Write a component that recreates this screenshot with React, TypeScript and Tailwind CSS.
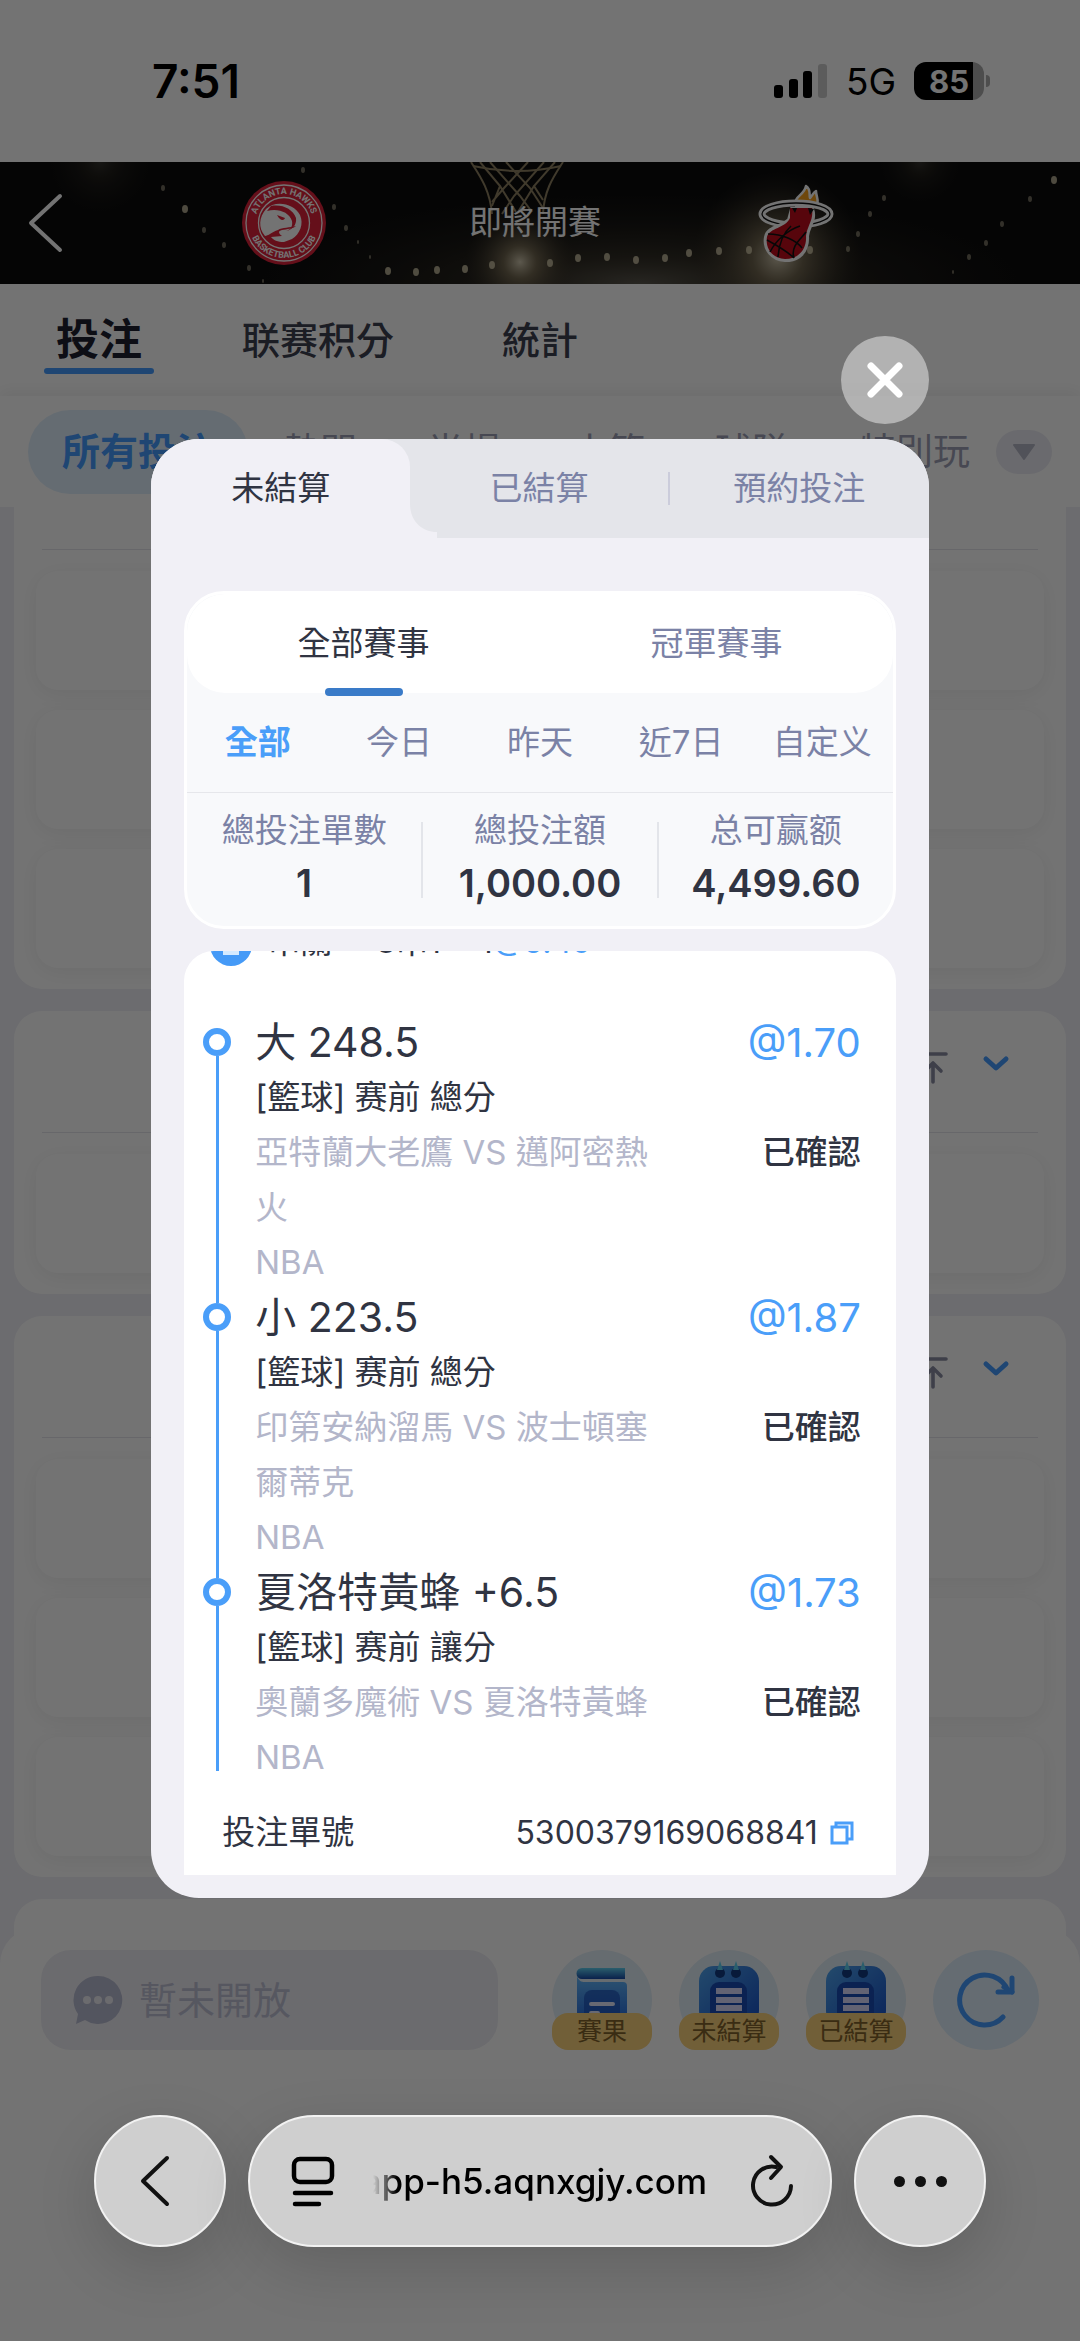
import React, { useState } from "react";

type Leg = {
  id: number;
  pick: string;
  odds: string;
  market: string;
  teams: string;
  league: string;
  status: string;
};

const legs: Leg[] = [
  {
    id: 1,
    pick: "大 248.5",
    odds: "@1.70",
    market: "[籃球] 赛前 總分",
    teams: "亞特蘭大老鷹 VS 邁阿密熱火",
    league: "NBA",
    status: "已確認",
  },
  {
    id: 2,
    pick: "小 223.5",
    odds: "@1.87",
    market: "[籃球] 赛前 總分",
    teams: "印第安納溜馬 VS 波士頓塞爾蒂克",
    league: "NBA",
    status: "已確認",
  },
  {
    id: 3,
    pick: "夏洛特黃蜂 +6.5",
    odds: "@1.73",
    market: "[籃球] 赛前 讓分",
    teams: "奧蘭多魔術 VS 夏洛特黃蜂",
    league: "NBA",
    status: "已確認",
  },
];

const summary = [
  { label: "總投注單數", value: "1" },
  { label: "總投注額", value: "1,000.00" },
  { label: "总可赢额", value: "4,499.60" },
];

const marketFilters = ["熱門", "半場", "小節", "球隊", "特別玩"];
const modalTabs = ["未結算", "已結算", "預約投注"];
const dateRanges = ["全部", "今日", "昨天", "近7日", "自定义"];

// Arena lamps behind the scoreboard: x, y, radius
const lamps = [
  [303, 8, 3], [163, 26, 3], [185, 47, 4], [204, 68, 3], [224, 83, 3], [249, 106, 3], [263, 119, 2],
  [334, 45, 3], [346, 66, 3], [358, 80, 2], [370, 95, 2], [388, 109, 4], [416, 110, 4], [437, 108, 4],
  [465, 107, 4], [492, 103, 4], [550, 101, 4], [578, 96, 4], [607, 95, 4], [636, 98, 4], [665, 96, 4],
  [689, 91, 4], [719, 89, 4], [749, 88, 4], [810, 88, 4], [848, 87, 3], [858, 72, 3], [870, 52, 3],
  [884, 36, 3], [1054, 18, 4], [1030, 37, 3], [1002, 62, 3], [986, 81, 3], [969, 95, 3], [953, 110, 2],
];

const ArenaBackdrop = () => (
  <svg
    className="absolute inset-0 h-full w-full"
    viewBox="0 0 1080 122"
    preserveAspectRatio="xMidYMid slice"
    aria-hidden="true"
  >
    <defs>
      <radialGradient id="glow">
        <stop offset="0" stopColor="#d6cdb4" stopOpacity="0.95" />
        <stop offset="0.3" stopColor="#8b7e62" stopOpacity="0.7" />
        <stop offset="1" stopColor="#3a3226" stopOpacity="0" />
      </radialGradient>
    </defs>
    <rect width="1080" height="122" fill="#0d0d0d" />
    <ellipse cx="640" cy="122" rx="380" ry="90" fill="url(#glow)" opacity="0.4" />
    <circle cx="520" cy="100" r="55" fill="url(#glow)" />
    <circle cx="778" cy="95" r="85" fill="url(#glow)" />
    <circle cx="100" cy="0" r="50" fill="url(#glow)" opacity="0.2" />
    <circle cx="920" cy="0" r="40" fill="url(#glow)" opacity="0.2" />
    {lamps.map(([x, y, r]) => (
      <ellipse key={`${x}-${y}`} cx={x} cy={y} rx={r - 1} ry={r} fill="#d6ccad" opacity={r > 3 ? 0.8 : 0.5} />
    ))}
    <g fill="none" stroke="#8f8062" strokeWidth="2">
      <path d="M471 0 C480 14 490 28 492 52 M563 0 C554 14 544 28 543 52" />
      <path d="M480 0 L500 24 L492 44 M490 0 L520 34 L532 50 M506 0 L530 26 L543 46 M528 0 L504 26 L492 40 M544 0 L514 34 L502 52 M555 0 L534 24 L543 38 M500 24 L516 50 M534 24 L518 50" />
      <path d="M473 4 Q517 14 561 4" />
    </g>
  </svg>
);

const HawksLogo = () => (
  <svg className="h-[84px] w-[84px]" viewBox="0 0 84 84" role="img" aria-label="Atlanta Hawks">
    <defs>
      <path id="hawks-top" d="M13 42 A29 29 0 0 1 71 42" />
      <path id="hawks-bottom" d="M7 42 A35 35 0 0 0 77 42" />
    </defs>
    <circle cx="42" cy="42" r="42" fill="#e0233a" />
    <circle cx="42" cy="42" r="38" fill="none" stroke="#fff" strokeWidth="1.3" />
    <circle cx="42" cy="42" r="25.5" fill="none" stroke="#fff" strokeWidth="1.3" />
    <path
      d="M24 28 C33 19 52 22 58 34 C62 43 58 53 50 58 L42 61 C36 61 31 59 29 56 L40 55 C36 52 36 50 40 49 C45 48 51 48 54 45 C48 47 40 46 36 49 C30 51 26 55 23 55 C16 47 17 36 24 28Z"
      fill="#fff"
    />
    <path d="M25 30 C36 27 47 31 50 40 C51 46 48 49 44 50 C50 49 55 44 54 37 C51 28 40 23 29 25Z" fill="#e0233a" />
    <path d="M35 34 L43 37 C42 40 38 40 35 34Z" fill="#e0233a" />
    <g fill="#fff" className="font-['Roboto',sans-serif] text-[9px] font-bold">
      <text textAnchor="middle">
        <textPath href="#hawks-top" startOffset="50%">ATLANTA HAWKS</textPath>
      </text>
      <text textAnchor="middle">
        <textPath href="#hawks-bottom" startOffset="50%">BASKETBALL CLUB</textPath>
      </text>
    </g>
  </svg>
);

const HeatLogo = () => (
  <svg className="h-[78px] w-[76px]" viewBox="0 0 76 78" role="img" aria-label="Miami Heat">
    <path
      d="M38 22 C35 12 46 12 48 2 C53 5 51 10 52 14 C54 12 55 9 58 7 C58 13 62 17 58 23Z"
      fill="#f5a01c" stroke="#fff" strokeWidth="2.5" strokeLinejoin="round"
    />
    <ellipse cx="38" cy="30" rx="34" ry="11" fill="none" stroke="#fff" strokeWidth="7" />
    <ellipse cx="38" cy="30" rx="34" ry="11" fill="none" stroke="#111" strokeWidth="1.3" />
    <path
      d="M34 25 H54 C58 36 50 42 49 52 C50 68 40 77 27 76 C13 75 6 64 8 53 C10 43 24 43 31 36Z"
      fill="#fff" stroke="#fff" strokeWidth="4"
    />
    <path d="M32 24 H54 C56 36 49 42 48 52 C49 66 40 75 27 75 C14 74 7 64 9 53 C11 44 28 44 32 34Z" fill="#c00d1c" />
    <path
      d="M9 56 C20 62 32 70 36 74 M10 50 C24 50 38 56 44 64 M12 68 C18 56 30 46 42 42 M20 73 C21 60 24 50 33 42 M36 74 C32 62 44 54 48 48"
      fill="none" stroke="#111" strokeWidth="1.6"
    />
    <path d="M34 24 L37 29 L39 24Z M50 24 L52 31 L56 25Z" fill="#111" />
  </svg>
);

const StatusBar = () => (
  <div className="flex h-[162px] items-center justify-between pr-[90px] pl-[152px] text-black">
    <span className="text-[46px] leading-none font-semibold">7:51</span>
    <div className="flex items-center gap-[18px]">
      <svg className="h-[36px] w-[54px]" viewBox="0 0 54 36" aria-hidden="true">
        <rect x="0" y="22" width="9" height="13" rx="3" />
        <rect x="15" y="16" width="9" height="19" rx="3" />
        <rect x="29" y="8" width="9" height="27" rx="3" />
        <rect x="44" y="1" width="9" height="34" rx="3" fill="#000" opacity="0.2" />
      </svg>
      <span className="text-[37px] leading-none">5G</span>
      <div className="flex items-center gap-0.5">
        <span className="flex h-[38px] w-[70px] items-center justify-center rounded-xl bg-linear-to-r from-black from-84% to-[#aaaaaa] to-84% text-[31px] leading-none font-bold text-white">
          85
        </span>
        <span className="h-3 w-1 rounded-r-full bg-[#aaaaaa]" />
      </div>
    </div>
  </div>
);

const MatchBanner = () => (
  <div className="relative h-[122px] overflow-hidden bg-[#0d0d0d]">
    <ArenaBackdrop />
    <div className="relative flex h-full items-center text-white">
      <button type="button" aria-label="返回" className="w-[158px] pl-[27px]">
        <svg className="h-[60px] w-[36px]" viewBox="0 0 36 60" fill="none" stroke="currentColor" strokeWidth="4" strokeLinecap="round" strokeLinejoin="round">
          <path d="M33 3 L4 30 L33 57" />
        </svg>
      </button>
      <div className="flex flex-1 justify-center">
        <HawksLogo />
      </div>
      <p className="flex-1 pr-2.5 text-center text-[33px]">即將開賽</p>
      <div className="flex flex-1 justify-center">
        <HeatLogo />
      </div>
      <div className="w-[158px]" />
    </div>
  </div>
);

const PageTabs = () => (
  <nav className="flex h-[112px] items-center gap-[88px] px-11 text-[38px] font-medium text-[#3c4050]">
    <button type="button" className="flex w-[110px] flex-col items-center pt-1 text-[43px] leading-[58px] font-bold text-[#1e2130]">
      投注
      <span className="h-1.5 w-full rounded-full bg-[#469cff]" />
    </button>
    <button type="button">联赛积分</button>
    <button type="button" className="ml-5">統計</button>
  </nav>
);

const MarketFilterBar = () => (
  <div className="flex h-[111px] items-center gap-6 bg-white px-7 shadow-[0_-4px_16px_rgba(0,0,0,0.06)]">
    <div className="flex flex-1 items-center overflow-hidden text-[37px] whitespace-nowrap text-[#9da0b6]">
      <button type="button" className="h-[84px] rounded-full bg-[#e1f0fc] px-[34px] text-[38px] font-bold text-[#469cff]">
        所有投注
      </button>
      {marketFilters.map((name) => (
        <button key={name} type="button" className="px-[35px]">
          {name}
        </button>
      ))}
    </div>
    <button type="button" aria-label="更多" className="flex h-11 w-[56px] items-center justify-center rounded-full bg-[#ececf3]">
      <svg className="h-[18px] w-[24px]" viewBox="0 0 24 18" fill="#b4b6c6" stroke="#b4b6c6" strokeWidth="2" strokeLinejoin="round">
        <path d="M2 2 H22 L12 16Z" />
      </svg>
    </button>
  </div>
);

const MarketCard = ({ rows, scrolled = false }: { rows: number; scrolled?: boolean }) => (
  <section className={scrolled ? "rounded-b-[28px] bg-white pb-[21px]" : "rounded-[28px] bg-white pb-[21px]"}>
    {scrolled ? (
      <div className="mx-7 h-[43px] border-b border-[#e4e4ea]" />
    ) : (
      <div className="mx-7 flex h-[122px] items-center justify-end gap-[34px] border-b border-[#e4e4ea] pr-7 pb-2">
        <svg className="h-8 w-[30px]" viewBox="0 0 30 32" fill="none" stroke="#8a8da3" strokeWidth="3.6" strokeLinecap="round" strokeLinejoin="round" aria-hidden="true">
          <path d="M2 2 H28 M15 30 V12 M7 19 L15 11 L23 19" />
        </svg>
        <button type="button" aria-label="展開" className="pb-2">
          <svg className="h-[18px] w-[28px]" viewBox="0 0 28 18" fill="none" stroke="#469cff" strokeWidth="5" strokeLinecap="round" strokeLinejoin="round">
            <path d="M4 4 L14 13 L24 4" />
          </svg>
        </button>
      </div>
    )}
    <div className="flex flex-col gap-5 px-[22px] pt-[21px]">
      {Array.from({ length: rows }, (_, i) => (
        <div key={i} className="h-[119px] rounded-[22px] bg-white shadow-[0_4px_22px_rgba(0,0,0,0.06)]" />
      ))}
    </div>
  </section>
);

const BookIcon = () => (
  <svg className="h-[62px] w-[62px]" viewBox="0 0 62 62" aria-hidden="true">
    <defs>
      <linearGradient id="book-cover" x1="0" y1="0" x2="0" y2="1">
        <stop offset="0" stopColor="#63b8fa" />
        <stop offset="1" stopColor="#1d5fd8" />
      </linearGradient>
      <linearGradient id="book-spine" x1="0" y1="0" x2="0" y2="1">
        <stop offset="0" stopColor="#5fd0f0" />
        <stop offset="1" stopColor="#1649a8" />
      </linearGradient>
    </defs>
    <path d="M11 2 H54 V13 H11 A5 5 0 0 1 11 2Z" fill="url(#book-spine)" />
    <path d="M6 10 C8 15 10 16 14 16 H52 Q56 16 56 20 V62 H6Z" fill="url(#book-cover)" />
    <rect x="13" y="24" width="36" height="38" rx="8" fill="#1d52bb" opacity="0.7" />
    <path d="M20 38 H42 M20 47 H27" stroke="#e4e8ff" strokeWidth="4" strokeLinecap="round" />
  </svg>
);

const ClipboardIcon = () => (
  <svg className="h-[62px] w-[62px] overflow-visible" viewBox="0 0 62 62" aria-hidden="true">
    <defs>
      <linearGradient id="board" x1="0" y1="0" x2="1" y2="1">
        <stop offset="0" stopColor="#4fa5f0" />
        <stop offset="1" stopColor="#164fc8" />
      </linearGradient>
    </defs>
    <rect x="1" y="0" width="60" height="60" rx="15" fill="url(#board)" />
    <rect x="12" y="16" width="37" height="44" rx="9" fill="#1a4db5" />
    <path d="M18 25 H44 M18 34 H44 M18 42 H44" stroke="#dcdcff" strokeWidth="6" />
    <circle cx="22" cy="7" r="5" fill="#123a80" />
    <circle cx="38" cy="7" r="5" fill="#123a80" />
    <path d="M19 4 L22 -5 L25 4Z M35 4 L38 -5 L41 4Z" fill="#5fd0f0" />
  </svg>
);

const shortcuts = [
  { label: "賽果", icon: <BookIcon /> },
  { label: "未結算", icon: <ClipboardIcon /> },
  { label: "已結算", icon: <ClipboardIcon /> },
];

const BottomPanel = () => (
  <div className="relative -mt-9 flex items-center rounded-t-[36px] bg-white px-[41px] pt-[22px] pb-[65px]">
    <label className="mr-[54px] flex h-[100px] min-w-0 flex-1 items-center gap-4 rounded-[30px] bg-[#eeeef4] pl-8">
      <svg className="h-[50px] w-[50px] shrink-0" viewBox="0 0 50 50" aria-hidden="true">
        <path d="M25 1 A24 24 0 1 1 12 45 L3 49 L5 39 A24 24 0 0 1 25 1Z" fill="#b9bcd2" />
        <g fill="#eeeef4">
          <circle cx="14" cy="25" r="4" />
          <circle cx="25" cy="25" r="4" />
          <circle cx="36" cy="25" r="4" />
        </g>
      </svg>
      <input
        type="text"
        aria-label="聊天"
        placeholder="暫未開放"
        className="w-full min-w-0 bg-transparent text-[38px] placeholder:text-[#bfc2d6]"
      />
    </label>
    <div className="flex gap-[27px]">
      {shortcuts.map(({ label, icon }) => (
        <button key={label} type="button" className="relative flex h-[100px] w-[100px] justify-center rounded-full bg-[#e3eff8] pt-4">
          {icon}
          <span className="absolute inset-x-0 bottom-0 flex h-[37px] items-center justify-center rounded-2xl bg-[#fad27c] text-[25px] leading-none text-[#81622a]">
            {label}
          </span>
        </button>
      ))}
      <button type="button" aria-label="刷新" className="flex h-[100px] w-[106px] items-center justify-center rounded-[50%] bg-[#e1f0fc]">
        <svg className="h-[58px] w-[58px]" viewBox="0 0 58 58" fill="none" stroke="#469cff" strokeWidth="5" strokeLinecap="round" strokeLinejoin="round">
          <path d="M46 46 A25 25 0 1 1 51 20" />
          <path d="M55 7 V21 H41" />
          <path d="M47 16 L55 21" />
        </svg>
      </button>
    </div>
  </div>
);

const BetLeg = ({ leg, first, last }: { leg: Leg; first: boolean; last: boolean }) => (
  <li className="flex gap-6 pr-[35px] pl-[19px]">
    <div className={last ? "flex w-7 flex-col items-center pb-3.5" : "flex w-7 flex-col items-center"}>
      <span className={first ? "h-[13px] w-[3px]" : "h-[13px] w-[3px] bg-[#4a9ef9]"} />
      <span className="h-7 w-7 rounded-full border-[6px] border-[#4a9ef9] bg-white" />
      <span className="w-[3px] flex-1 bg-[#4a9ef9]" />
    </div>
    <div className="flex-1 text-[33px] leading-[55px] text-[#303442]">
      <div className="flex justify-between text-[41px]">
        <span>{leg.pick}</span>
        <span className="text-[40px] text-[#4a9ef9]">{leg.odds}</span>
      </div>
      <p>{leg.market}</p>
      <div className="flex items-start justify-between">
        <p className="w-[410px] text-[#b3b6ca]">{leg.teams}</p>
        <span className="font-medium">{leg.status}</span>
      </div>
      <p className="text-[#b3b6ca]">{leg.league}</p>
    </div>
  </li>
);

const BetSlip = () => (
  <div className="overflow-hidden rounded-t-[30px] bg-white">
    {/* Parlay header, scrolled mostly out of view */}
    <div className="-mt-[27px] flex h-[42px] items-center pr-[35px] pl-[26px] text-[32px] text-[#303442]">
      <svg className="mr-4 h-[42px] w-[42px]" viewBox="0 0 42 42" aria-hidden="true">
        <circle cx="21" cy="21" r="21" fill="#459af7" />
        <path d="M13 11 H29 V31 H13Z" fill="#d5eaff" />
      </svg>
      <span className="mr-11 pb-1.5">串關</span>
      <span className="pb-1.5">3串1 * 1</span>
      <span className="pb-1.5 text-[#4a9ef9]">@5.49</span>
    </div>
    <ul className="mt-[49px]">
      {legs.map((leg, i) => (
        <BetLeg key={leg.id} leg={leg} first={i === 0} last={i === legs.length - 1} />
      ))}
    </ul>
    <div className="mt-1.5 flex h-[84px] items-center justify-between pr-[42px] pl-[38px] text-[33px] text-[#303442]">
      <span>投注單號</span>
      <div className="flex items-center gap-3">
        <span className="text-[32px]">5300379169068841</span>
        <button type="button" aria-label="複製">
          <svg className="h-6 w-6" viewBox="0 0 24 24" fill="none" stroke="#4a9ef9" strokeWidth="3">
            <path d="M2 6 H17 V22 H2Z" />
            <path d="M6 6 V2 H22 V18 H17" />
          </svg>
        </button>
      </div>
    </div>
  </div>
);

const BetRecordModal: React.FC = () => {
  const [range, setRange] = useState("全部");

  return (
    <div className="absolute inset-0 z-10 flex flex-col items-center bg-black/55 pt-[336px]">
      <div className="flex w-[72%] flex-col gap-[15px]">
        <button type="button" aria-label="關閉" className="flex h-[88px] w-[88px] items-center justify-center self-end rounded-full bg-white/45">
          <svg className="h-10 w-10" viewBox="0 0 40 40" stroke="#fff" strokeWidth="7" strokeLinecap="round">
            <path d="M6 6 L34 34 M34 6 L6 34" />
          </svg>
        </button>

        <div role="dialog" aria-label="投注記錄" className="overflow-hidden rounded-[48px] bg-[#f1f0f6] pb-[23px]">
          {/* Settlement tabs */}
          <div className="flex h-[99px] bg-[#e4e5ea] text-[33px] text-[#7b82a6]">
            {modalTabs.map((tab, i) =>
              i === 0 ? (
                <button key={tab} type="button" className="relative flex-1 rounded-tr-[28px] bg-[#f1f0f6] text-[#303442]">
                  {tab}
                  <svg className="absolute bottom-0 left-full h-[34px] w-[27px]" viewBox="0 0 27 34" fill="#f1f0f6" aria-hidden="true">
                    <path d="M-1 0 H0 C0 16 11 28 27 28 V34 H-1Z" />
                  </svg>
                </button>
              ) : (
                <div key={tab} className="flex flex-1 items-center">
                  <button type="button" className="flex-1">
                    {tab}
                  </button>
                  {i === 1 && <span className="h-[33px] w-0.5 bg-[#cbccdb]" />}
                </div>
              )
            )}
          </div>

          <div className="flex flex-col gap-[22px] px-[33px] pt-[53px]">
            <div className="overflow-hidden rounded-[40px] border-[3px] border-white bg-[#f8f9fb]">
              <div className="flex h-[99px] rounded-[38px] bg-white text-[33px]">
                <button type="button" className="relative flex-1 text-[#303442]">
                  全部賽事
                  <span className="absolute -bottom-[3px] left-1/2 h-2 w-[78px] -translate-x-1/2 rounded bg-[#3a7bc8]" />
                </button>
                <button type="button" className="flex-1 text-[#7b82a6]">
                  冠軍賽事
                </button>
              </div>

              <div className="flex h-[100px] border-b border-[#e6e7eb] text-[33px]">
                {dateRanges.map((name) => (
                  <button
                    key={name}
                    type="button"
                    onClick={() => setRange(name)}
                    className={name === range ? "flex-1 font-bold text-[#4a9ef9]" : "flex-1 text-[#7b82a6]"}
                  >
                    {name}
                  </button>
                ))}
              </div>

              <dl className="flex h-[133px] items-center divide-x-2 divide-[#e3e5ea]">
                {summary.map(({ label, value }) => (
                  <div key={label} className="flex h-[76px] flex-1 flex-col items-center justify-center pb-1.5">
                    <dt className="text-[33px] leading-[53px] text-[#7b82a6]">{label}</dt>
                    <dd className="text-[38px] leading-[53px] font-semibold text-[#303442]">{value}</dd>
                  </div>
                ))}
              </dl>
            </div>

            <BetSlip />
          </div>
        </div>
      </div>
    </div>
  );
};

const BrowserBar = () => (
  <div className="relative z-20 flex gap-[22px] px-[94px] pb-[93px] text-[#111111]">
    <button type="button" aria-label="上一頁" className="flex h-[132px] w-[132px] items-center justify-center rounded-full border-2 border-[#f2f2f2] bg-[#cfcfcf] pr-2.5 shadow-[0_20px_60px_rgba(0,0,0,0.15)]">
      <svg className="h-[52px] w-[30px]" viewBox="0 0 30 52" fill="none" stroke="currentColor" strokeWidth="4" strokeLinecap="round" strokeLinejoin="round">
        <path d="M27 3 L3 26 L27 49" />
      </svg>
    </button>
    <div className="flex h-[132px] min-w-0 flex-1 items-center rounded-full border-2 border-[#f2f2f2] bg-[#cfcfcf] pr-[36px] pl-[41px] shadow-[0_20px_60px_rgba(0,0,0,0.15)]">
      <button type="button" aria-label="頁面選單">
        <svg className="h-[52px] w-[44px]" viewBox="0 0 44 52" fill="none" stroke="#000" strokeWidth="4.5" strokeLinecap="round">
          <rect x="3" y="4" width="38" height="23" rx="6" />
          <path d="M4 38 H40 M4 49 H28" />
        </svg>
      </button>
      <div className="ml-[38px] flex min-w-0 flex-1 justify-end overflow-hidden [mask-image:linear-gradient(to_right,transparent,#000_24px)]">
        <span className="text-[35px] font-medium whitespace-nowrap text-black">app-h5.aqnxgjy.com</span>
      </div>
      <button type="button" aria-label="重新載入" className="ml-[43px]">
        <svg className="h-[54px] w-[44px]" viewBox="0 0 44 54" fill="none" stroke="currentColor" strokeWidth="4" strokeLinecap="round" strokeLinejoin="round">
          <path d="M26 13 A19 19 0 1 0 41 32" />
          <path d="M21 3 L31 13 L21 24" />
        </svg>
      </button>
    </div>
    <button type="button" aria-label="更多選項" className="flex h-[132px] w-[132px] items-center justify-center gap-2.5 rounded-full border-2 border-[#f2f2f2] bg-[#cfcfcf] shadow-[0_20px_60px_rgba(0,0,0,0.15)]">
      <span className="h-[11px] w-[11px] rounded-full bg-current" />
      <span className="h-[11px] w-[11px] rounded-full bg-current" />
      <span className="h-[11px] w-[11px] rounded-full bg-current" />
    </button>
  </div>
);

const App: React.FC = () => (
  <div className="relative min-h-screen overflow-hidden bg-white font-['Inter','Noto_Sans_CJK_TC',sans-serif]">
    <StatusBar />
    <MatchBanner />
    <PageTabs />
    <MarketFilterBar />
    <main className="flex flex-col gap-[22px] bg-[#efeff5] px-3.5">
      <MarketCard rows={3} scrolled />
      <MarketCard rows={1} />
      <MarketCard rows={3} />
      <div className="h-[65px] rounded-t-[28px] bg-white" />
    </main>
    <BottomPanel />
    <BetRecordModal />
    <BrowserBar />
  </div>
);

export default App;
